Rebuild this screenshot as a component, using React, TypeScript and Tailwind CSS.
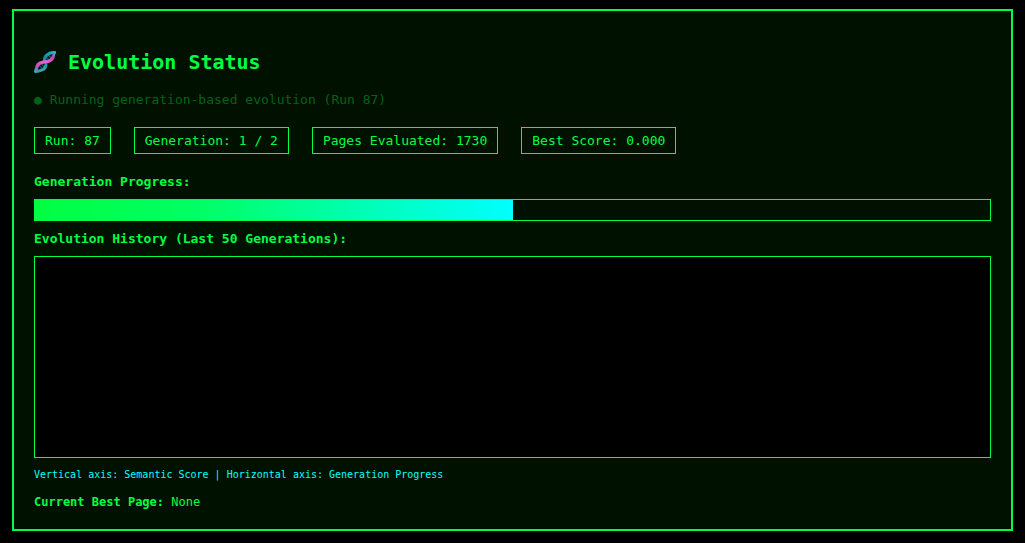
const stats = [
  { label: 'Run', value: '87' },
  { label: 'Generation', value: '1 / 2' },
  { label: 'Pages Evaluated', value: '1730' },
  { label: 'Best Score', value: '0.000' },
];

function DnaIcon() {
  return (
    <svg viewBox="0 0 22 22" className="size-[22px] shrink-0" aria-hidden="true">
      <defs>
        <linearGradient id="dna-cyan" gradientUnits="userSpaceOnUse" x1="0" y1="22" x2="22" y2="0">
          <stop offset="0" stopColor="#35a9bd" />
          <stop offset="0.35" stopColor="#2ba3b5" />
          <stop offset="0.6" stopColor="#1d8799" />
          <stop offset="1" stopColor="#1cc3d2" />
        </linearGradient>
        <linearGradient id="dna-pink" gradientUnits="userSpaceOnUse" x1="0" y1="22" x2="22" y2="0">
          <stop offset="0" stopColor="#b03ba8" />
          <stop offset="0.5" stopColor="#ee5fd8" />
          <stop offset="1" stopColor="#9c3a9c" />
        </linearGradient>
      </defs>
      <g fill="none" strokeLinecap="round">
        <path d="M4.4 13.6 9 18M6.8 12.4 10.8 16.4M11.6 5.6 15.8 9.6M14 3.8 18.2 8" stroke="#235a78" strokeWidth="1.3" />
        <path d="M1.4 20.4C6.5 20.5 12 18.4 12 13.4" stroke="url(#dna-cyan)" strokeWidth="3" />
        <path d="M10.6 9.4C10.2 4.6 14.8 1.6 20.6 1.5" stroke="url(#dna-cyan)" strokeWidth="3.2" />
        <path d="M2.6 18.4C2.4 13.8 5 11.6 9.4 11.1C14 10.6 18.6 9.9 19.4 5" stroke="url(#dna-pink)" strokeWidth="3.2" />
        <path d="M19.8 4.4 20.7 1.6M1.3 20.3 1.7 17.8" stroke="#25b2c3" strokeWidth="2" />
        <path d="M4 20.8 6 20.4" stroke="#c04ab8" strokeWidth="1" />
      </g>
    </svg>
  );
}

export default function App() {
  return (
    <main className="min-h-screen bg-black px-3 pt-[9px] pb-3 font-['DejaVu_Sans_Mono',monospace] text-[13px] leading-4 text-[#00ff41]">
      <section className="border-2 border-[#00ff41] bg-[#001100] p-5">
        <h2 className="mt-[19px] flex items-center gap-3 text-[20px] leading-6 font-bold">
          <DnaIcon />
          Evolution Status
        </h2>
        <p className="mt-[18px] text-[#00ff41]/35">● Running generation-based evolution (Run 87)</p>
        <ul className="mt-[19px] flex flex-wrap gap-[23px]">
          {stats.map((s) => (
            <li key={s.label} className="border border-[#00ff41] px-2.5 py-[5px] leading-[15px]">
              {s.label}: {s.value}
            </li>
          ))}
        </ul>
        <h3 id="progress-label" className="mt-5 font-bold">
          Generation Progress:
        </h3>
        <div
          role="progressbar"
          aria-labelledby="progress-label"
          aria-valuenow={50}
          aria-valuemin={0}
          aria-valuemax={100}
          className="mt-[9px] h-[22px] border border-[#00ff41]"
        >
          <div
            className="h-full bg-linear-to-r/srgb from-[#00ff41] via-[#00ff65] via-35% to-[#00ffff]"
            style={{ width: '50%' }}
          />
        </div>
        <h3 id="history-label" className="mt-2.5 font-bold">
          Evolution History (Last 50 Generations):
        </h3>
        <canvas
          aria-labelledby="history-label"
          className="mt-[9px] block h-[202px] w-full border border-[#00ff41] bg-black"
        />
        <p className="mt-[9px] text-[10px] text-[#00ffff]">
          Vertical axis: Semantic Score | Horizontal axis: Generation Progress
        </p>
        <p className="mt-[11px] -mb-px text-[12px]">
          <strong className="font-bold">Current Best Page:</strong> None
        </p>
      </section>
    </main>
  );
}
